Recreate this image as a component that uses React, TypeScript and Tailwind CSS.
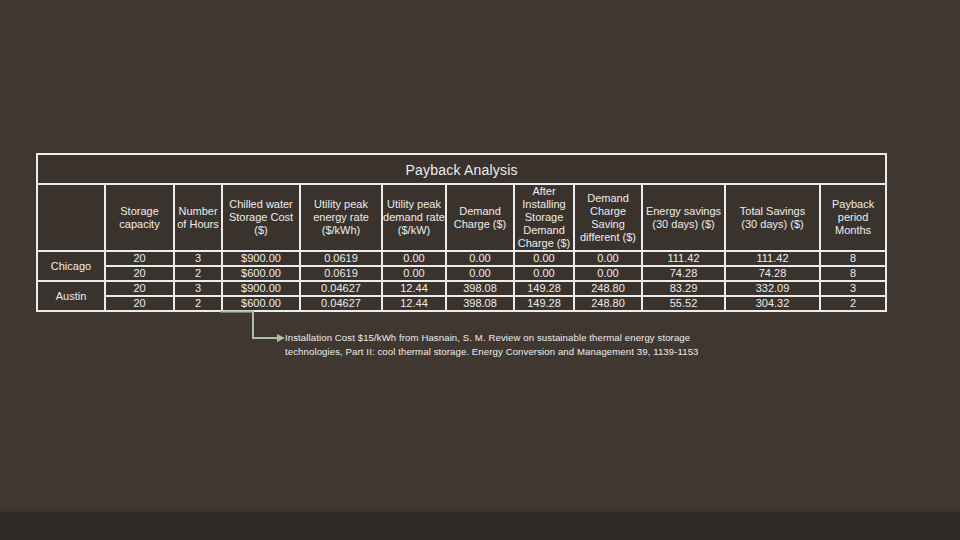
import React from "react";

const widths = [68, 69, 48, 78, 82, 64, 68, 60, 68, 83, 95, 66];

const headers: string[][] = [
  [],
  ["Storage", "capacity"],
  ["Number", "of Hours"],
  ["Chilled water", "Storage Cost", "($)"],
  ["Utility peak", "energy rate", "($/kWh)"],
  ["Utility peak", "demand rate", "($/kW)"],
  ["Demand", "Charge ($)"],
  ["After", "Installing", "Storage", "Demand", "Charge ($)"],
  ["Demand", "Charge", "Saving", "different ($)"],
  ["Energy savings", "(30 days) ($)"],
  ["Total Savings", "(30 days) ($)"],
  ["Payback", "period", "Months"],
];

const rows: string[][] = [
  ["20", "3", "$900.00", "0.0619", "0.00", "0.00", "0.00", "0.00", "111.42", "111.42", "8"],
  ["20", "2", "$600.00", "0.0619", "0.00", "0.00", "0.00", "0.00", "74.28", "74.28", "8"],
  ["20", "3", "$900.00", "0.04627", "12.44", "398.08", "149.28", "248.80", "83.29", "332.09", "3"],
  ["20", "2", "$600.00", "0.04627", "12.44", "398.08", "149.28", "248.80", "55.52", "304.32", "2"],
];

const cell = "border-2 border-[#ececec] text-center align-middle p-0";

export default function App() {
  return (
    <div
      className="w-[960px] h-[540px] bg-[#3f3730] flex flex-col overflow-hidden text-[#ececec]"
      style={{ fontFamily: '"Liberation Sans", Arial, sans-serif' }}
    >
      <div className="flex-1 pt-[153px] pl-[36px]">
        <table className="border-collapse table-fixed w-[850px] bg-[#3a332d]">
          <colgroup>
            {widths.map((w, i) => (
              <col key={i} style={{ width: w }} />
            ))}
          </colgroup>
          <tbody>
            <tr className="h-[30px]">
              <td colSpan={12} className={`${cell} text-[14px] tracking-[0.2px] pt-[3px]`}>
                Payback Analysis
              </td>
            </tr>
            <tr className="h-[67px]">
              {headers.map((h, i) => (
                <td key={i} className={`${cell} text-[11px] leading-[13px] whitespace-nowrap overflow-visible`}>
                  {h.map((l, j) => (
                    <div key={j}>{l}</div>
                  ))}
                </td>
              ))}
            </tr>
            {rows.map((r, ri) => (
              <tr key={ri} className="h-[15px]">
                {ri % 2 === 0 && (
                  <td rowSpan={2} className={`${cell} text-[11px]`}>
                    {ri === 0 ? "Chicago" : "Austin"}
                  </td>
                )}
                {r.map((v, ci) => (
                  <td key={ci} className={`${cell} text-[11px] leading-[13px]`}>
                    {v}
                  </td>
                ))}
              </tr>
            ))}
          </tbody>
        </table>
        <div className="flex ml-[184px]">
          <svg width="65" height="40" viewBox="0 0 65 40" className="shrink-0 -mt-[2px]">
            <path d="M0 1.5 H33 V28 H58" fill="none" stroke="#aabfa8" strokeWidth="2" />
            <polygon points="57,24 65,28 57,32" fill="#aabfa8" />
          </svg>
          <div className="mt-[19px] text-[9.6px] leading-[14px] tracking-[0.1px] text-[#ececec]">
            <div>Installation Cost $15/kWh from Hasnain, S. M. Review on sustainable thermal energy storage</div>
            <div>technologies, Part II: cool thermal storage. Energy Conversion and Management 39, 1139-1153</div>
          </div>
        </div>
      </div>
      <div className="h-[29px] bg-[#2e2924] border-t border-[#3a3129]" />
    </div>
  );
}
